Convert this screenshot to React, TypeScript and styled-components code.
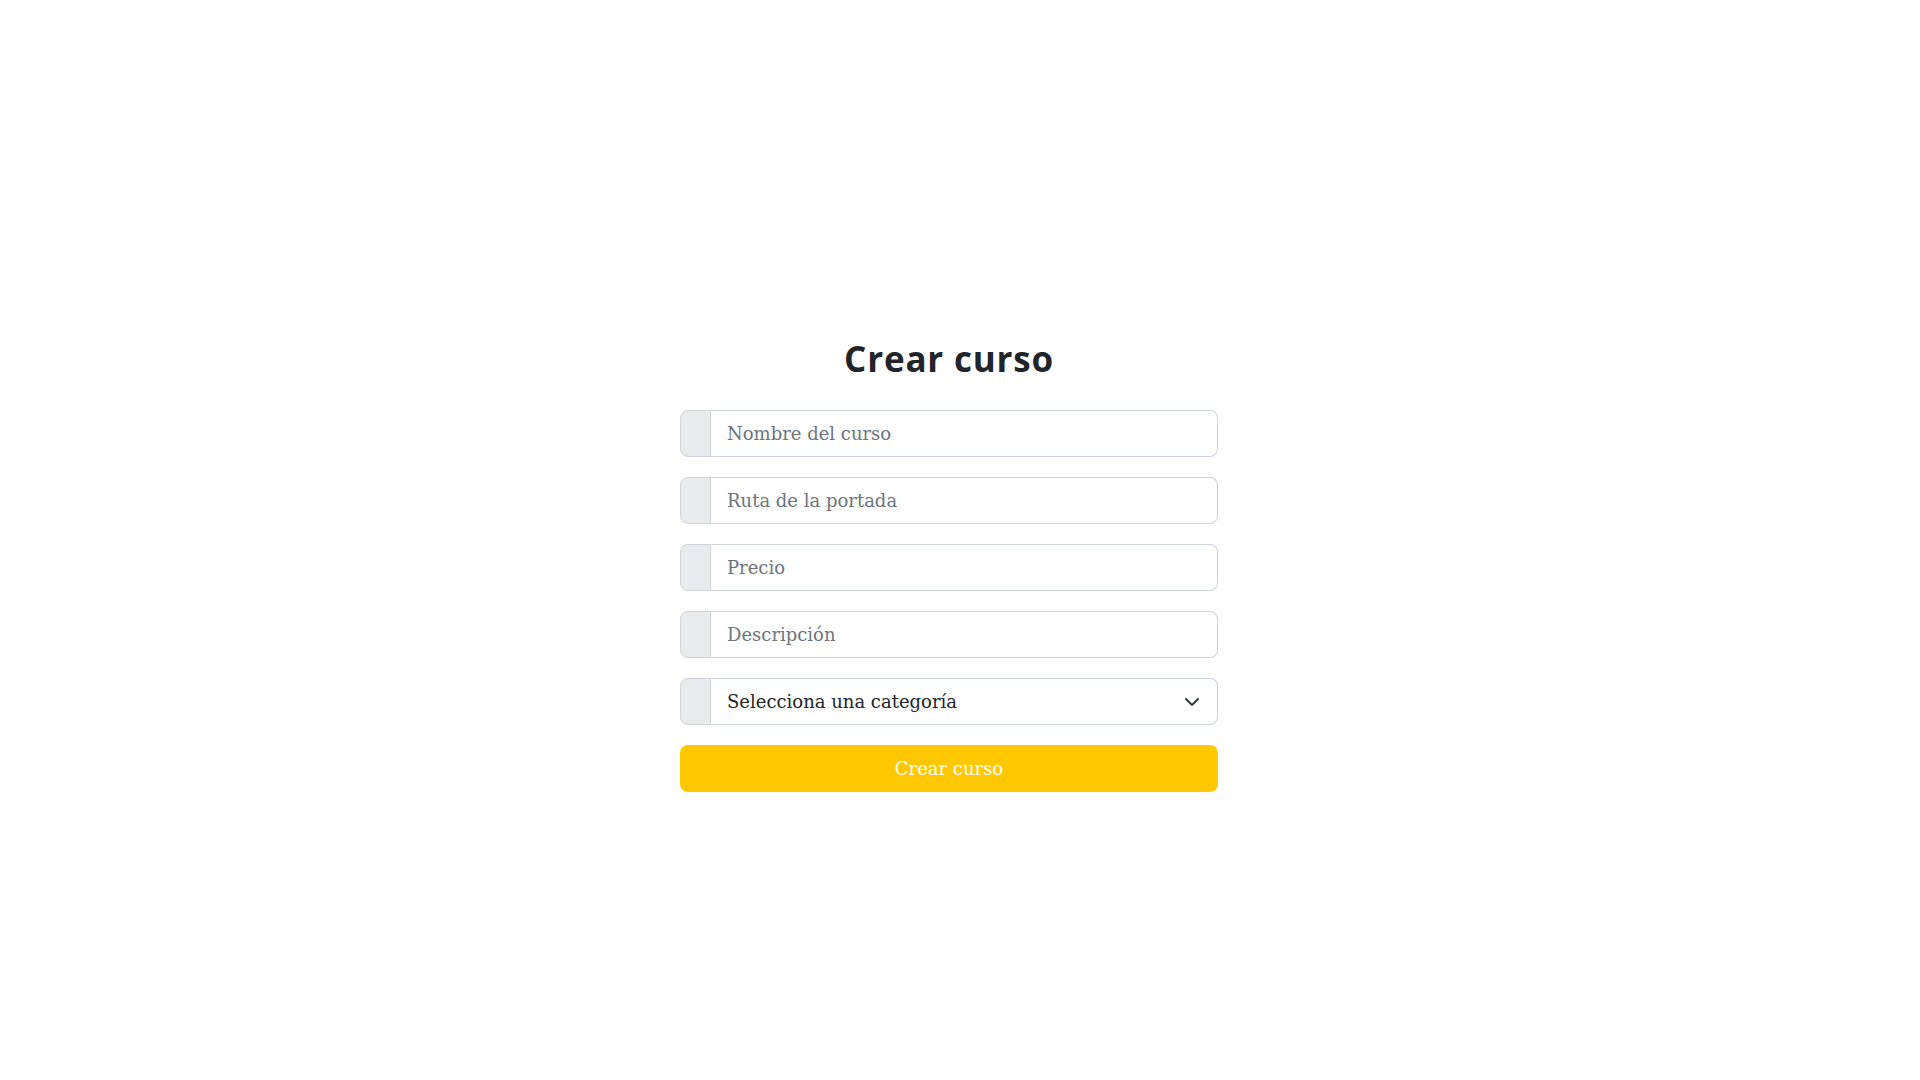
import React from 'react';
import styled, { createGlobalStyle } from 'styled-components';

const GlobalStyle = createGlobalStyle`
  html, body {
    margin: 0;
    padding: 0;
    background: #fff;
  }
  * {
    box-sizing: border-box;
  }
`;

// right padding keeps the form where it sits beside the page scrollbar
const Page = styled.main`
  min-height: 100vh;
  box-sizing: content-box;
  padding: 25px 22px 25px 0;
  display: flex;
  align-items: center;
  justify-content: center;
`;

const Form = styled.form`
  width: 538px;
  display: flex;
  flex-direction: column;
  gap: 20px;
`;

const Title = styled.h2`
  margin: 0 0 11px;
  text-align: center;
  font-family: "Open Sans", sans-serif;
  font-weight: 700;
  font-size: 35px;
  letter-spacing: 0.8px;
  line-height: 41px;
  color: #212529;
`;

const Group = styled.div`
  display: flex;
  height: 47px;
`;

const Addon = styled.span`
  width: 31px;
  flex: none;
  background: #e9ecef;
  border: 1px solid #ced4da;
  border-radius: 8px 0 0 8px;
`;

const Field = styled.div`
  flex: 1;
  display: flex;
  align-items: center;
  border: 1px solid #ced4da;
  border-left: none;
  border-radius: 0 8px 8px 0;
  background: #fff;
  padding: 0 17px 0 16px;
`;

const Input = styled.input`
  flex: 1;
  border: none;
  outline: none;
  padding: 0;
  background: transparent;
  font-family: "DejaVu Serif", serif;
  font-size: 18px;
  color: #212529;

  &::placeholder {
    color: #6c757d;
  }
`;

const Select = styled.select`
  flex: 1;
  border: none;
  outline: none;
  padding: 0;
  background: transparent;
  appearance: none;
  font-family: "DejaVu Serif", serif;
  font-size: 18px;
  color: #212529;
`;

const Submit = styled.button`
  height: 47px;
  border: none;
  border-radius: 8px;
  background: #ffc800;
  color: #fff;
  font-family: "DejaVu Serif", serif;
  font-size: 18px;
  cursor: pointer;
`;

const Chevron = () => (
  <svg width="16" height="16" viewBox="0 0 16 16" fill="none" stroke="#343a40"
    strokeWidth="2" strokeLinecap="round" strokeLinejoin="round">
    <path d="m2 5 6 6 6-6" />
  </svg>
);

const fields = ['Nombre del curso', 'Ruta de la portada', 'Precio', 'Descripción'];

export default function App() {
  return (
    <>
      <GlobalStyle />
      <Page>
        <Form onSubmit={(e) => e.preventDefault()}>
          <Title>Crear curso</Title>
          {fields.map((f) => (
            <Group key={f}>
              <Addon />
              <Field>
                <Input placeholder={f} />
              </Field>
            </Group>
          ))}
          <Group>
            <Addon />
            <Field>
              <Select defaultValue="">
                <option value="">Selecciona una categoría</option>
              </Select>
              <Chevron />
            </Field>
          </Group>
          <Submit type="submit">Crear curso</Submit>
        </Form>
      </Page>
    </>
  );
}
